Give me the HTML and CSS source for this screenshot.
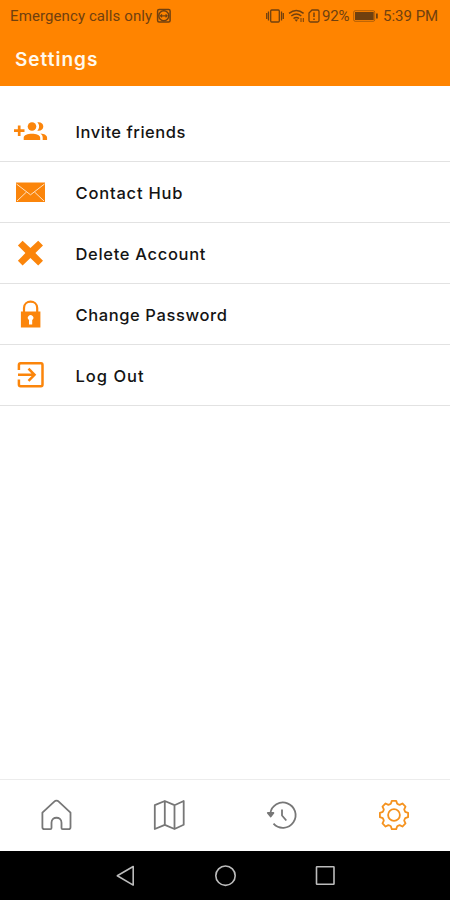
FILE: index.html
```html
<!DOCTYPE html>
<html lang="en">
<head>
<meta charset="utf-8">
<title>Settings</title>
<link rel="stylesheet" href="styles.css">
</head>
<body>
<div class="screen">
  <header class="top">
    <div class="status">
      <span class="carrier">Emergency calls only</span>
      <svg class="badge" width="16" height="16" viewBox="156 8 16 16" fill="none" stroke="currentColor"><rect x="157.600" y="9.600" width="12.500" height="12.500" rx="1.500" stroke-width="1.500"/><circle cx="163.800" cy="15.800" r="5" stroke-width="1.500"/><path d="M160.500 15.800h6.600M162 14.300l-1.500 1.500 1.500 1.500M165.600 14.300l1.500 1.500-1.500 1.500" stroke-width="1.200"/></svg>
      <svg class="signals" width="56" height="18" viewBox="265 7 56 18" fill="none" stroke="currentColor" stroke-width="1.300"><rect x="270.700" y="10" width="8.600" height="12" rx="1"/><path d="M268.500 11.500v9M266.700 13v6M281.500 11.500v9M283.300 13v6"/><path d="M289 13.300q7.300-5.700 14.600 0M291.300 16q5-4 10 0M293.500 18.500q2.800-2 5.600 0" stroke-width="1.500"/><path d="M294.500 19.500h3.600l-1.800 2.200z" fill="currentColor" stroke="none"/><path d="M301 18v4M303.300 18v4" stroke-width="1"/><path d="M312 10h5.500q1.500 0 1.500 1.500v9q0 1.500-1.500 1.500h-7q-1.500 0-1.500-1.500V13z"/><path d="M314 12.500v4.500M314 18.500v1.600" stroke-width="1.500"/></svg>
      <span class="percent">92%</span>
      <svg class="battery" width="26" height="12" viewBox="353 10 26 12"><rect x="353.700" y="10.700" width="21" height="10.600" rx="1.500" fill="none" stroke="currentColor" opacity=".55"/><rect x="355" y="12" width="18.700" height="8" fill="currentColor"/><path d="M376 13.500h1.800v5H376z" fill="currentColor"/></svg>
      <span class="clock">5:39 PM</span>
    </div>
    <h1>Settings</h1>
  </header>

  <main>
    <ul class="menu">
      <li><svg class="icon" viewBox="10 112 40 40"><path d="M14 130.700h10.500M19.200 125.500v10.400" stroke="currentColor" stroke-width="2.700"/><circle cx="32" cy="126.500" r="4.300"/><path d="M37.300 122.300c3.800-.5 6 1.600 6 4.200s-2.200 4.700-6 4.200c2.400-2.300 2.400-6.100 0-8.400zM23.700 140v-2.300c0-5.200 16.500-5.200 16.500 0v2.300zM40.500 133.500c3.800.3 6.600 1.900 6.600 4.200v2.300h-4.400v-2.300c0-1.700-.8-3.100-2.200-4.200z"/></svg><span class="invite">Invite friends</span></li>
      <li><svg class="icon" viewBox="10 173 40 40"><rect x="16" y="182.500" width="29" height="19.500"/><path d="M16.500 184l14 10.800 14-10.800M17 201l9.500-9M44 201l-9.500-9" fill="none" stroke="#ffe2c2" stroke-width="1"/></svg><span class="contact">Contact Hub</span></li>
      <li><svg class="icon" viewBox="10 234 40 40"><path d="M22.600 240.800l7.800 7.300 7.800-7.300 4.800 4.700-7.600 7.600 7.600 7.600-4.800 4.700-7.800-7.400-7.800 7.400-4.700-4.700 7.500-7.600-7.500-7.600z"/></svg><span class="delete">Delete Account</span></li>
      <li><svg class="icon" viewBox="10 295 40 40"><path d="M24 312v-4c0-8.500 13.200-8.500 13.200 0v4" fill="none" stroke="currentColor" stroke-width="2.200"/><rect x="20.900" y="311.500" width="19.500" height="16"/><path d="M29 320a2.700 2.700 0 1 1 3.200 0v4.500H29z" fill="#fff"/></svg><span class="password">Change Password</span></li>
      <li><svg class="icon" viewBox="10 356 40 40"><path d="M18.900 370v-5q0-1.700 1.700-1.700H41q1.500 0 1.500 1.700v19.500q0 1.700-1.500 1.700H20.600q-1.700 0-1.700-1.700v-5M18 374.800h16.200M28.500 368.700l6 6.100-6 6.100" fill="none" stroke="currentColor" stroke-width="2.500"/></svg><span class="logout">Log Out</span></li>
    </ul>
  </main>

  <nav class="tabs">
    <svg viewBox="38 797 36 36"><path d="M44.300 829.200q-1.900 0-1.900-1.900v-14.600L54 801.800q2.500-2.300 5 0l11.500 10.900v14.600q0 1.900-1.900 1.900h-5.900q-1.200 0-1.200-1.200v-5.200c0-6.700-10-6.700-10 0v5.200q0 1.200-1.200 1.200z"/></svg>
    <svg viewBox="151 797 36 36"><path d="M154.800 805.200l10-4.200 9.700 4.200 9.200-4.200v23.800l-9.200 4.200-9.700-4.200-10 4.200zM164.800 801v23.800M174.500 805.200V829"/></svg>
    <svg viewBox="263.500 797 36 36"><path d="M270.800 813.500a12.700 12.700 0 1 1 3.200 10.200M282.500 809.500v6l4.300 5"/><path d="M268.300 813h5.600l-2.700 3.500z" fill="currentColor"/></svg>
    <svg class="active" viewBox="-18 -18 36 36"><path d="M-3.200-11.200L-2.200-14.100H2.200L3.200-11.200Q4.400-10.400 5.660-10.180L8.410-11.520 11.520-8.410 10.180-5.660Q10.500-4.400 11.200-3.200L14.100-2.200V2.200L11.200 3.200Q10.400 4.400 10.180 5.660L11.520 8.410 8.410 11.520 5.660 10.180Q4.400 10.500 3.200 11.200L2.200 14.100H-2.200L-3.200 11.200Q-4.400 10.400-5.660 10.180L-8.410 11.520-11.520 8.410-10.180 5.660Q-10.500 4.400-11.200 3.200L-14.100 2.200V-2.200L-11.200-3.200Q-10.400-4.400-10.180-5.660L-11.520-8.410-8.410-11.520-5.660-10.180Q-4.400-10.500-3.200-11.200z"/><circle r="5.900"/></svg>
  </nav>
  <footer class="system">
    <svg viewBox="113 863 25 25"><path d="M133.200 866.500v18.600l-15.900-9.300z"/></svg>
    <svg viewBox="213 863 25 25"><circle cx="225.500" cy="875.700" r="9.700"/></svg>
    <svg viewBox="313 863 25 25"><rect x="316.500" y="866.800" width="17.500" height="17.500" rx=".5"/></svg>
  </footer>
</div>
</body>
</html>
```
FILE: styles.css
```css
* { box-sizing: border-box; }
body { margin: 0; background: #fff; color: #141414; font-family: Inter, "Open Sans", sans-serif; }
.screen { width: 450px; height: 900px; display: flex; flex-direction: column; overflow: hidden; }
.top { height: 86px; background: #ff8400; flex: none; }
.status { height: 32px; padding: 0 0 0 10px; display: flex; align-items: center; color: #70400f; font: 15px/32px Roboto, sans-serif; white-space: nowrap; }
.status > * { flex: none; }
.carrier { width: 146px; letter-spacing: .1px; }
.signals { margin-left: 93px; }
.percent { width: 31px; margin-left: 1px; letter-spacing: -.2px; }
.clock { margin-left: 4px; }
h1 { margin: 0; padding: 1px 0 0 15px; font-size: 19px; line-height: 54px; font-weight: 600; color: #fff8ec; letter-spacing: 1px; }
main { flex: 1; padding-top: 15px; }
.menu { list-style: none; margin: 0; padding: 0; }
.menu li { height: 61px; padding: 2px 0 0 10px; display: flex; align-items: center; border-bottom: 1.500px solid #e2e2e2; font-size: 16.500px; font-weight: 450; white-space: nowrap; }
.icon { width: 40px; height: 40px; margin-right: 25.500px; color: #fb850b; fill: currentColor; flex: none; }
.invite { letter-spacing: .52px; }
.contact { letter-spacing: .8px; }
.delete { letter-spacing: .68px; }
.password { letter-spacing: .6px; }
.logout { letter-spacing: 1px; }
.tabs { height: 72px; padding-bottom: 2px; border-top: 1px solid #ececec; display: grid; grid-template-columns: repeat(4, 1fr); place-items: center; color: #777; flex: none; }
.tabs svg { width: 36px; height: 36px; fill: none; stroke: currentColor; stroke-width: 1.800; stroke-linejoin: round; }
.tabs .active { color: #f5921e; }
.system { height: 49px; background: #000; display: flex; justify-content: center; align-items: center; gap: 75px; flex: none; }
.system svg { width: 25px; height: 25px; fill: none; stroke: #bcbcbc; stroke-width: 1.600; stroke-linejoin: round; }
```
